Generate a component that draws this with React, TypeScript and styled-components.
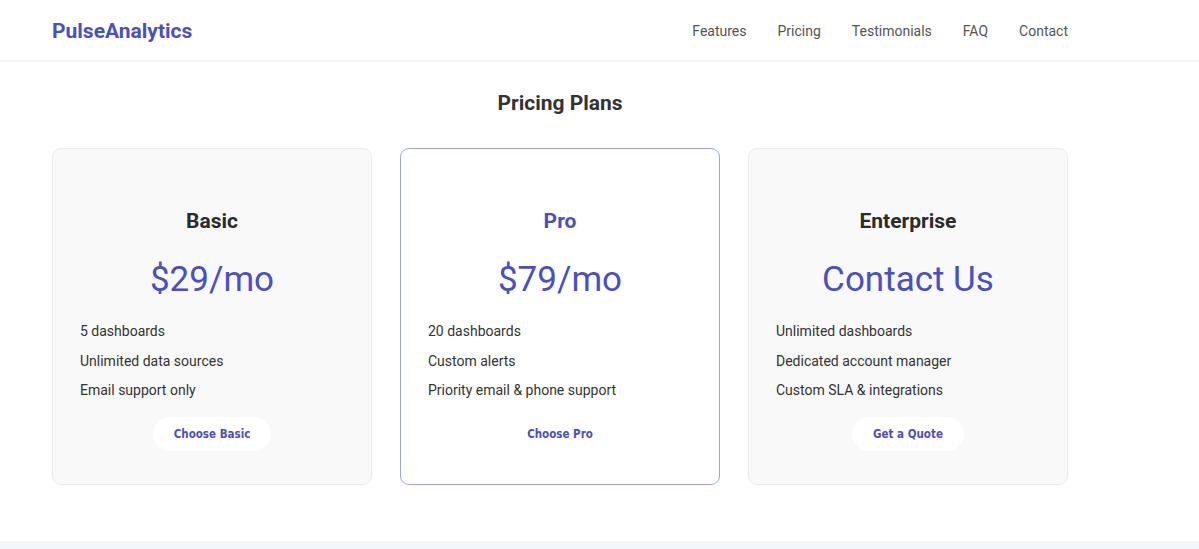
import styled, { createGlobalStyle } from "styled-components"

const GlobalStyle = createGlobalStyle`
    body {
        margin: 0;
        background: #ffffff;
        font-family: Roboto, "Liberation Sans", sans-serif;
        color: #333333;
    }
`

const Header = styled.header`
    height: 62px;
    box-sizing: border-box;
    border-bottom: 2px solid #f2f2f2;
    display: flex;
    align-items: center;
    padding: 2px 0 0 52px;
`

const HeaderInner = styled.div`
    width: 1016px;
    display: flex;
    justify-content: space-between;
    align-items: center;
`

const Logo = styled.div`
    font-size: 21px;
    font-weight: 700;
    color: #4a4fc4;
`

const Nav = styled.nav`
    display: flex;
    gap: 31px;
`

const NavLink = styled.a`
    font-size: 14px;
    color: #555555;
    text-decoration: none;
`

const Section = styled.section`
    padding: 26px 0 0 52px;
    height: 479px;
    box-sizing: border-box;
`

const Inner = styled.div`
    width: 1016px;
`

const Title = styled.h2`
    margin: 0 0 30px;
    text-align: center;
    font-size: 21px;
    font-weight: 700;
    color: #333333;
    line-height: 30px;
`

const Grid = styled.div`
    display: grid;
    grid-template-columns: repeat(3, 320px);
    gap: 28px;
`

const Card = styled.div<{ $featured?: boolean }>`
    height: 337px;
    box-sizing: border-box;
    border-radius: 9px;
    border: 1px solid ${p => p.$featured ? "#9fa2dd" : "#ececec"};
    background: ${p => p.$featured ? "#ffffff" : "#f9f9f9"};
    padding: 58px 27px 0;
    display: flex;
    flex-direction: column;
`

const PlanName = styled.h3<{ $featured?: boolean }>`
    margin: 0;
    text-align: center;
    font-size: 21px;
    font-weight: 700;
    line-height: 28px;
    color: ${p => p.$featured ? "#4a4fc4" : "#2b2b2b"};
`

const Price = styled.div`
    margin-top: 23px;
    text-align: center;
    font-size: 35px;
    line-height: 44px;
    color: #4a4fc4;
`

const Features = styled.ul`
    list-style: none;
    margin: 15px 0 0;
    padding: 0;
`

const Feature = styled.li`
    font-size: 14px;
    line-height: 29.5px;
    color: #333333;
`

const ChooseButton = styled.button`
    align-self: center;
    margin-top: 11px;
    height: 34px;
    padding: 0 21px;
    border: none;
    border-radius: 17px;
    background: #ffffff;
    color: #4a4fc4;
    font-family: "DejaVu Sans Condensed", "DejaVu Sans", sans-serif;
    font-size: 11.5px;
    font-weight: 700;
    cursor: pointer;
`

const NextBand = styled.div`
    height: 8px;
    background: #f3f6fa;
`

const links = ["Features", "Pricing", "Testimonials", "FAQ", "Contact"]

const plans = [
    { name: "Basic", price: "$29/mo", features: ["5 dashboards", "Unlimited data sources", "Email support only"], cta: "Choose Basic" },
    { name: "Pro", price: "$79/mo", features: ["20 dashboards", "Custom alerts", "Priority email & phone support"], cta: "Choose Pro", featured: true },
    { name: "Enterprise", price: "Contact Us", features: ["Unlimited dashboards", "Dedicated account manager", "Custom SLA & integrations"], cta: "Get a Quote" },
]

export default function App() {
    return (
        <>
            <GlobalStyle />
            <Header>
                <HeaderInner>
                    <Logo>PulseAnalytics</Logo>
                    <Nav>
                        {links.map(l => <NavLink key={l} href="#">{l}</NavLink>)}
                    </Nav>
                </HeaderInner>
            </Header>
            <Section>
                <Inner>
                    <Title>Pricing Plans</Title>
                    <Grid>
                        {plans.map(plan => (
                            <Card key={plan.name} $featured={plan.featured}>
                                <PlanName $featured={plan.featured}>{plan.name}</PlanName>
                                <Price>{plan.price}</Price>
                                <Features>
                                    {plan.features.map(f => <Feature key={f}>{f}</Feature>)}
                                </Features>
                                <ChooseButton>{plan.cta}</ChooseButton>
                            </Card>
                        ))}
                    </Grid>
                </Inner>
            </Section>
            <NextBand />
        </>
    )
}
